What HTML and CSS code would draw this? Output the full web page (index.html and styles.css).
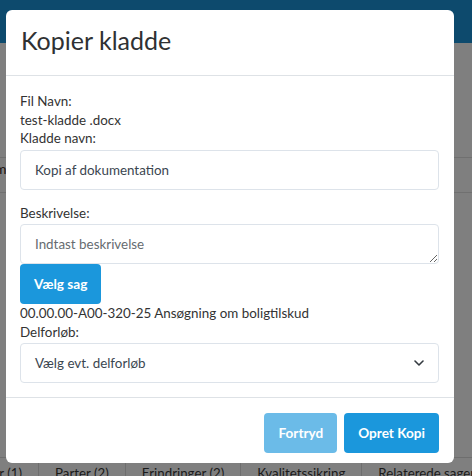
FILE: index.html
```html
<!DOCTYPE html>
<html lang="da">
<head>
<meta charset="utf-8">
<title>Kopier kladde</title>
<link rel="stylesheet" href="styles.css">
</head>
<body>
<div class="app">
  <div class="topbar"></div>
  <div class="page">
    <div class="row"><span class="cell-cut">m</span></div>
  </div>
  <div class="tabs">
    <div class="tab tab-first"><span>Noter (1)</span></div>
    <div class="tab">Parter (2)</div>
    <div class="tab">Erindringer (2)</div>
    <div class="tab">Kvalitetssikring</div>
    <div class="tab">Relaterede sager</div>
  </div>
</div>

<div class="modal">
  <div class="modal-header">
    <h1 class="modal-title">Kopier kladde</h1>
  </div>
  <div class="modal-body">
    <div class="label">Fil Navn:</div>
    <div class="text">test-kladde .docx</div>
    <div class="label label-gap">Kladde navn:</div>
    <input class="field field-spaced" type="text" value="Kopi af dokumentation">
    <div class="label label-gap">Beskrivelse:</div>
    <textarea class="field area" placeholder="Indtast beskrivelse"></textarea>
    <button class="btn btn-primary btn-case" type="button">Vælg sag</button>
    <div class="text">00.00.00-A00-320-25 Ansøgning om boligtilskud</div>
    <div class="label label-gap">Delforløb:</div>
    <div class="field select">
      <span>Vælg evt. delforløb</span>
      <svg class="chev" width="10" height="6" viewBox="0 0 10 6"><path d="M1 1l4 4 4-4" fill="none" stroke="#343a40" stroke-width="1.6" stroke-linecap="round" stroke-linejoin="round"/></svg>
    </div>
  </div>
  <div class="modal-footer">
    <button class="btn btn-primary btn-muted" type="button">Fortryd</button>
    <button class="btn btn-primary" type="button">Opret Kopi</button>
  </div>
</div>
</body>
</html>
```

FILE: styles.css
```css
* { box-sizing: border-box; }
html, body { margin: 0; padding: 0; }
body {
  width: 472px;
  height: 476px;
  overflow: hidden;
  font-family: Lato, "Open Sans", "Liberation Sans", sans-serif;
  font-size: 13.4px;
  color: #333;
  background: #7f7f7f;
  position: relative;
}
.app {
  height: 476px;
  display: flex;
  flex-direction: column;
}
.topbar {
  height: 43px;
  background: #0d4a6d;
  flex: none;
}
.page {
  flex: 1;
  padding-top: 114px;
}
.row {
  height: 36px;
  border-top: 1px solid #707070;
  border-bottom: 1px solid #707070;
  display: flex;
  align-items: flex-start;
  padding-top: 2px;
  color: #1e1410;
  font-size: 14px;
}
.cell-cut { margin-left: -5px; }
.tabs {
  flex: none;
  height: 19px;
  border-top: 1px solid #6e6e6e;
  display: flex;
  color: #1a1a1a;
  font-size: 13.3px;
  line-height: 1;
}
.tab {
  padding: 9px 16px 0;
  border-right: 1px solid #6e6e6e;
  white-space: nowrap;
}
.tab-first {
  width: 39px;
  flex: none;
  overflow: hidden;
  display: flex;
  justify-content: flex-end;
  padding: 9px 16px 0 0;
}
.tab-first span { flex: none; }

.modal {
  position: absolute;
  top: 10px;
  left: 6px;
  width: 448px;
  height: 453px;
  background: #fff;
  border-radius: 6px;
  display: flex;
  flex-direction: column;
}
.modal-header {
  padding: 12px 15px 17px 15px;
  border-bottom: 1px solid #dee2e6;
}
.modal-title {
  margin: 0;
  font-size: 25px;
  font-weight: 400;
  line-height: 36px;
  color: #2f3133;
}
.modal-body {
  padding: 16px 15px 14px 14px;
  line-height: 18.5px;
}
.label, .text { color: #333; }
.label-gap { margin-bottom: 2px; }
.field {
  display: block;
  width: 100%;
  height: 40px;
  border: 1px solid #dde3ea;
  border-radius: 4px;
  padding: 0 14px;
  font-family: inherit;
  font-size: 13.4px;
  color: #3b4650;
  background: #fff;
  margin: 0;
  outline: none;
}
.field-spaced { margin-bottom: 14px; }
.area {
  height: 40px;
  padding: 9px 14px;
  line-height: 20px;
  resize: vertical;
}
.area::placeholder { color: #666b70; opacity: 1; }
.select {
  display: flex;
  align-items: center;
  justify-content: space-between;
  padding-right: 14px;
}
.chev { display: block; }
.btn {
  font-family: inherit;
  font-size: 13.6px;
  font-weight: 700;
  color: #fff;
  border: none;
  border-radius: 4px;
  height: 40px;
  padding: 0 14px;
  cursor: pointer;
}
.btn-primary { background: #1b97dc; }
.btn-muted { background: #6bbbe8; }
.btn-case { display: block; }
.modal-footer {
  margin-top: auto;
  border-top: 1px solid #dee2e6;
  padding: 15px 15px 10px;
  display: flex;
  justify-content: flex-end;
  gap: 7px;
}
```
